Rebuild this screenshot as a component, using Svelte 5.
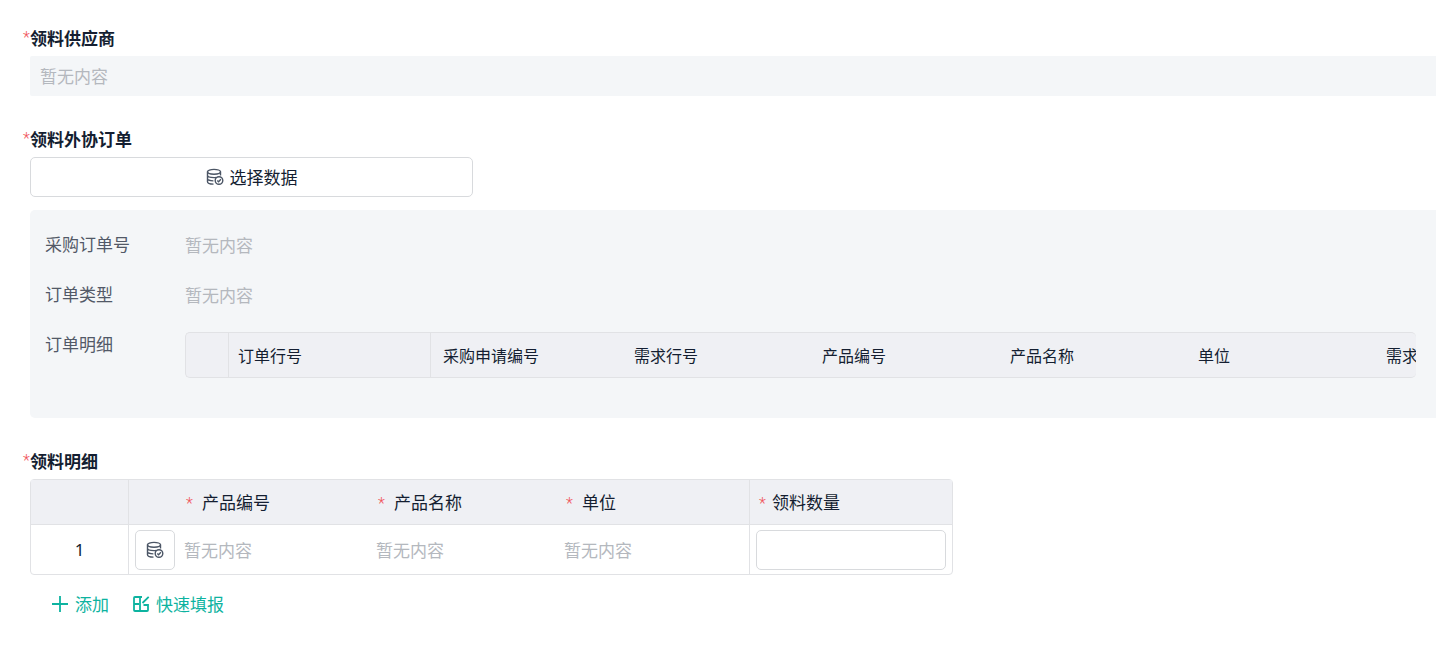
<script>
  const empty = '暂无内容';
  const orderColumns = ['订单行号', '采购申请编号', '需求行号', '产品编号', '产品名称', '单位', '需求'];
  let rows = $state([{ quantity: '' }]);

  function addRow() {
    rows.push({ quantity: '' });
  }
</script>

{#snippet databaseIcon()}
  <svg class="icon" viewBox="0 0 18 18" aria-hidden="true">
    <ellipse cx="8" cy="3.8" rx="6.500" ry="2.4" />
    <path d="M1.500 3.8v9.900c0 1.500 2.500 2.400 6 2.400M14.500 3.800v3.700M1.500 7.300c0 1.400 3 2.300 6.500 2.300 1 0 1.600-.1 2.200-.2M1.500 10.600c0 1.300 2.500 2.200 5.900 2.300" />
    <circle cx="13" cy="12.500" r="3.800" />
    <path d="M11.300 12.400l1.300 1.300 2.300-2.400" />
  </svg>
{/snippet}

<main class="form">
  <section class="field">
    <h2 class="label"><span class="star">*</span>领料供应商</h2>
    <div class="readonly">{empty}</div>
  </section>

  <section class="field">
    <h2 class="label"><span class="star">*</span>领料外协订单</h2>
    <button class="select-data" type="button">
      {@render databaseIcon()}
      选择数据
    </button>
    <div class="panel">
      <div class="panel-row">
        <span class="name">采购订单号</span>
        <span class="empty">{empty}</span>
      </div>
      <div class="panel-row">
        <span class="name">订单类型</span>
        <span class="empty">{empty}</span>
      </div>
      <div class="panel-row">
        <span class="name">订单明细</span>
        <div class="order-scroll">
          <table class="order-table" aria-label="订单明细">
            <thead>
              <tr>
                <th class="index"></th>
                {#each orderColumns as column}
                  <th>{column}</th>
                {/each}
              </tr>
            </thead>
          </table>
        </div>
      </div>
    </div>
  </section>

  <section class="field">
    <h2 class="label"><span class="star">*</span>领料明细</h2>
    <table class="detail" aria-label="领料明细">
      <colgroup>
        <col class="c-index" />
        <col class="c-pick" />
        <col class="c-code" />
        <col class="c-name" />
        <col class="c-unit" />
        <col class="c-quantity" />
      </colgroup>
      <thead>
        <tr>
          <th></th>
          <th class="divided"></th>
          <th><span class="star">*</span>产品编号</th>
          <th><span class="star">*</span>产品名称</th>
          <th><span class="star">*</span>单位</th>
          <th class="divided quantity"><span class="star">*</span>领料数量</th>
        </tr>
      </thead>
      <tbody>
        {#each rows as row, i}
          <tr>
            <td class="number">{i + 1}</td>
            <td class="divided pick">
              <button class="pick-button" type="button" aria-label="选择数据">
                {@render databaseIcon()}
              </button>
            </td>
            <td class="empty">{empty}</td>
            <td class="empty">{empty}</td>
            <td class="empty">{empty}</td>
            <td class="divided entry">
              <input type="text" aria-label="领料数量" bind:value={row.quantity} />
            </td>
          </tr>
        {/each}
      </tbody>
    </table>
    <div class="actions">
      <button type="button" onclick={addRow}>
        <svg class="icon" viewBox="0 0 18 18" aria-hidden="true">
          <path d="M9 1v16M1 9h16" />
        </svg>
        添加
      </button>
      <button type="button">
        <svg class="icon" viewBox="0 0 18 18" aria-hidden="true">
          <path d="M10 2H3q-1 0-1 1v12q0 1 1 1h12q1 0 1-1V10H11.500M2 9h5M8 2v14M16.700 1.800L10.500 8" />
        </svg>
        快速填报
      </button>
    </div>
  </section>
</main>

<style>
  :global(body) {
    margin: 0;
    background: #fff;
  }

  .form {
    padding: 26px 0 24px 30px;
    overflow-x: hidden;
    color: #141e31;
    font: 17px/24px "Noto Sans CJK SC", sans-serif;
  }

  .field + .field {
    margin-top: 31px;
  }

  .label {
    display: flex;
    margin: 0 0 6px -7px;
    font-size: 17px;
    font-weight: 700;
  }

  .star {
    width: 7px;
    color: #f05258;
    font-family: Roboto, sans-serif;
    font-size: 16px;
    font-weight: 300;
  }

  .readonly {
    padding: 8px 10px;
    background: #f4f6f8;
    border-radius: 2px 0 0 2px;
    color: #b4b8be;
  }

  .empty {
    color: #b4b8be;
  }

  button {
    display: flex;
    align-items: center;
    justify-content: center;
    box-sizing: border-box;
    background: #fff;
    border: 1px solid #d8dadd;
    border-radius: 5px;
    color: inherit;
    font: inherit;
    cursor: pointer;
  }

  .icon {
    width: 18px;
    height: 18px;
    fill: none;
    stroke: #4b5565;
    stroke-width: 1.4;
  }

  .select-data {
    gap: 6px;
    width: 443px;
    max-width: 100%;
    height: 40px;
  }

  .panel {
    display: grid;
    margin-top: 13px;
    padding: 10px 20px 40px 15px;
    background: #f4f6f8;
    border-radius: 5px 0 0 5px;
  }

  .panel-row {
    display: grid;
    grid-template-columns: 140px minmax(0, 1fr);
    min-height: 50px;
  }

  .panel-row > .name {
    padding-top: 12px;
    color: #525967;
  }

  .panel-row > .empty {
    padding-top: 13px;
  }

  .order-scroll {
    margin-top: 12px;
    overflow: hidden;
    border: 1px solid #e1e2e5;
    border-right: 0;
    border-radius: 5px;
    background: #eff0f4;
  }

  table {
    border-spacing: 0;
    table-layout: fixed;
  }

  th {
    padding: 0 9px;
    font-weight: 400;
    text-align: left;
    white-space: nowrap;
  }

  .order-table {
    width: 1379px;
    font-size: 16px;
  }

  .order-table th {
    width: 170px;
    height: 44px;
  }

  .order-table th.index {
    width: 24px;
  }

  .order-table th:nth-child(2) {
    width: 183px;
    border-left: 1px solid #e1e2e5;
  }

  .order-table th:nth-child(3) {
    width: 173px;
    padding-left: 12px;
    border-left: 1px solid #e1e2e5;
  }

  .detail {
    width: 923px;
    border: 1px solid #e1e2e5;
    border-radius: 4px;
  }

  .c-index {
    width: 97px;
  }

  .c-pick {
    width: 47px;
  }

  .c-code {
    width: 192px;
  }

  .c-name {
    width: 188px;
  }

  .c-quantity {
    width: 203px;
  }

  .detail th {
    height: 42px;
    padding: 2px 11px 0;
    background: #eff0f4;
    border-bottom: 1px solid #e1e2e5;
  }

  .detail td {
    height: 49px;
    padding: 0 9px;
  }

  .detail .divided {
    border-left: 1px solid #e1e2e5;
  }

  .detail .star {
    display: inline-block;
    width: 16px;
  }

  .detail .quantity {
    padding-inline: 9px;
  }

  .detail .quantity .star {
    width: 13px;
  }

  .detail .number {
    font-family: "Noto Sans", sans-serif;
    text-align: center;
  }

  .detail .pick {
    padding: 0 0 0 6px;
  }

  .pick-button {
    width: 40px;
    height: 40px;
    padding: 0;
  }

  .detail .entry {
    padding: 0 6px;
  }

  input {
    display: block;
    box-sizing: border-box;
    width: 100%;
    height: 40px;
    padding: 0 10px;
    border: 1px solid #d8dadd;
    border-radius: 5px;
    color: inherit;
    font: inherit;
  }

  .actions {
    display: flex;
    gap: 23px;
    margin: 17px 0 0 21px;
  }

  .actions button {
    gap: 6px;
    padding: 0;
    border: 0;
    color: #0db3a0;
  }

  .actions .icon {
    stroke: #0db3a0;
    stroke-width: 1.8;
  }
</style>
